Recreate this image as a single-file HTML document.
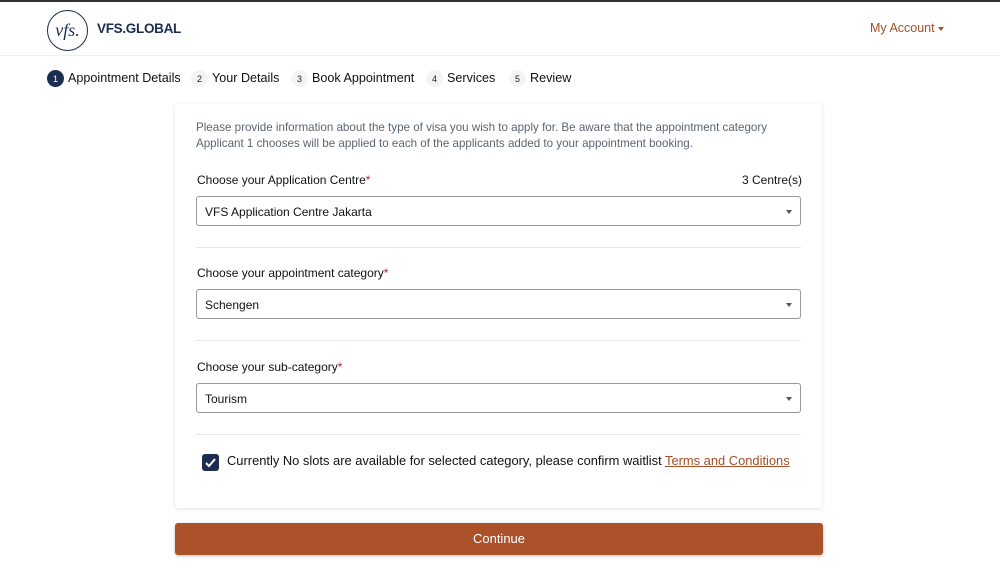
<!DOCTYPE html>
<html><head><meta charset="utf-8"><style>
*{box-sizing:border-box;margin:0;padding:0}
body{width:1000px;height:572px;overflow:hidden;background:#fff;font-family:"Liberation Sans",Arial,sans-serif;color:#222;position:relative}
.topbar{position:absolute;left:0;top:0;width:1000px;height:2px;background:#333}
.header{position:absolute;left:0;top:2px;width:1000px;height:54px;border-bottom:1px solid #eee}
.logo{position:absolute;left:47px;top:8px;width:41px;height:41px;border:1.5px solid #1c2e4f;border-radius:50%;color:#1c2e4f;font-family:"Liberation Serif",serif;font-style:italic;font-size:18px;text-align:center;line-height:38px}
.brand{position:absolute;left:97px;top:19px;font-size:13.5px;font-weight:bold;color:#1c2e4f;letter-spacing:-0.3px}
.acct{position:absolute;left:870px;top:19px;font-size:12.5px;color:#a34f27}
.acct:after{content:"";position:absolute;left:68px;top:6px;border:3.5px solid transparent;border-top:4px solid #a34f27}
.st{position:absolute;top:71px;font-size:12.6px;color:#111;white-space:nowrap}
.num{position:absolute;top:70px;width:17px;height:17px;border-radius:50%;background:#f4f4f4;font-size:9px;display:flex;align-items:center;justify-content:center;color:#222}
.num.a{background:#1c2e4f;color:#fff}
.card{position:absolute;left:175px;top:104px;width:647px;height:404px;background:#fff;box-shadow:0 1px 4px rgba(0,0,0,.12);border-radius:3px}
.intro{position:absolute;left:196px;top:120px;width:610px;font-size:11.6px;line-height:15.5px;color:#5c6570}
.lbl{position:absolute;left:197px;font-size:12px;color:#111}
.lbl b{color:#b01e2c;font-weight:normal}
.sel{position:absolute;left:196px;width:605px;height:30px;border:1px solid #999;border-radius:3px;font-size:12px;padding:8px 0 0 8px;color:#111}
.sel:after{content:"";position:absolute;right:8px;top:13px;border:3.5px solid transparent;border-top:4px solid #555}
.hr{position:absolute;left:196px;width:605px;height:1px;background:#e6e6e6}
.cb{position:absolute;left:202px;top:454px;width:17px;height:17px;background:#1c2e4f;border-radius:3px}
.chk{position:absolute;left:227px;top:453px;font-size:12.9px;color:#111}
.chk a{color:#a34f27;text-decoration:underline}
.btn{position:absolute;left:175px;top:523px;width:648px;height:32px;background:#ab522a;border-radius:3px;color:#fff;font-size:13px;text-align:center;line-height:32px;box-shadow:0 1px 3px rgba(0,0,0,.25)}
</style></head><body>
<div class="topbar"></div>
<div class="header"><div class="logo">vfs.</div><div class="brand">VFS.GLOBAL</div><div class="acct">My Account</div></div>
<span class="num a" style="left:47px">1</span><span class="st" style="left:68px">Appointment Details</span>
<span class="num" style="left:191px">2</span><span class="st" style="left:212px">Your Details</span>
<span class="num" style="left:291px">3</span><span class="st" style="left:312px">Book Appointment</span>
<span class="num" style="left:426px">4</span><span class="st" style="left:447px">Services</span>
<span class="num" style="left:509px">5</span><span class="st" style="left:530px">Review</span>
<div class="card"></div>
<div class="intro">Please provide information about the type of visa you wish to apply for. Be aware that the appointment category Applicant 1 chooses will be applied to each of the applicants added to your appointment booking.</div>
<div class="lbl" style="top:173px">Choose your Application Centre<b>*</b></div>
<div class="lbl" style="top:173px;left:742px">3 Centre(s)</div>
<div class="sel" style="top:196px">VFS Application Centre Jakarta</div>
<div class="hr" style="top:247px"></div>
<div class="lbl" style="top:266px">Choose your appointment category<b>*</b></div>
<div class="sel" style="top:289px">Schengen</div>
<div class="hr" style="top:340px"></div>
<div class="lbl" style="top:360px">Choose your sub-category<b>*</b></div>
<div class="sel" style="top:383px">Tourism</div>
<div class="hr" style="top:434px"></div>
<div class="cb"><svg width="17" height="17" viewBox="0 0 17 17"><path d="M4 9l3 3 6-7" stroke="#fff" stroke-width="2" fill="none"/></svg></div>
<div class="chk">Currently No slots are available for selected category, please confirm waitlist <a>Terms and Conditions</a></div>
<div class="btn">Continue</div>
</body></html>
